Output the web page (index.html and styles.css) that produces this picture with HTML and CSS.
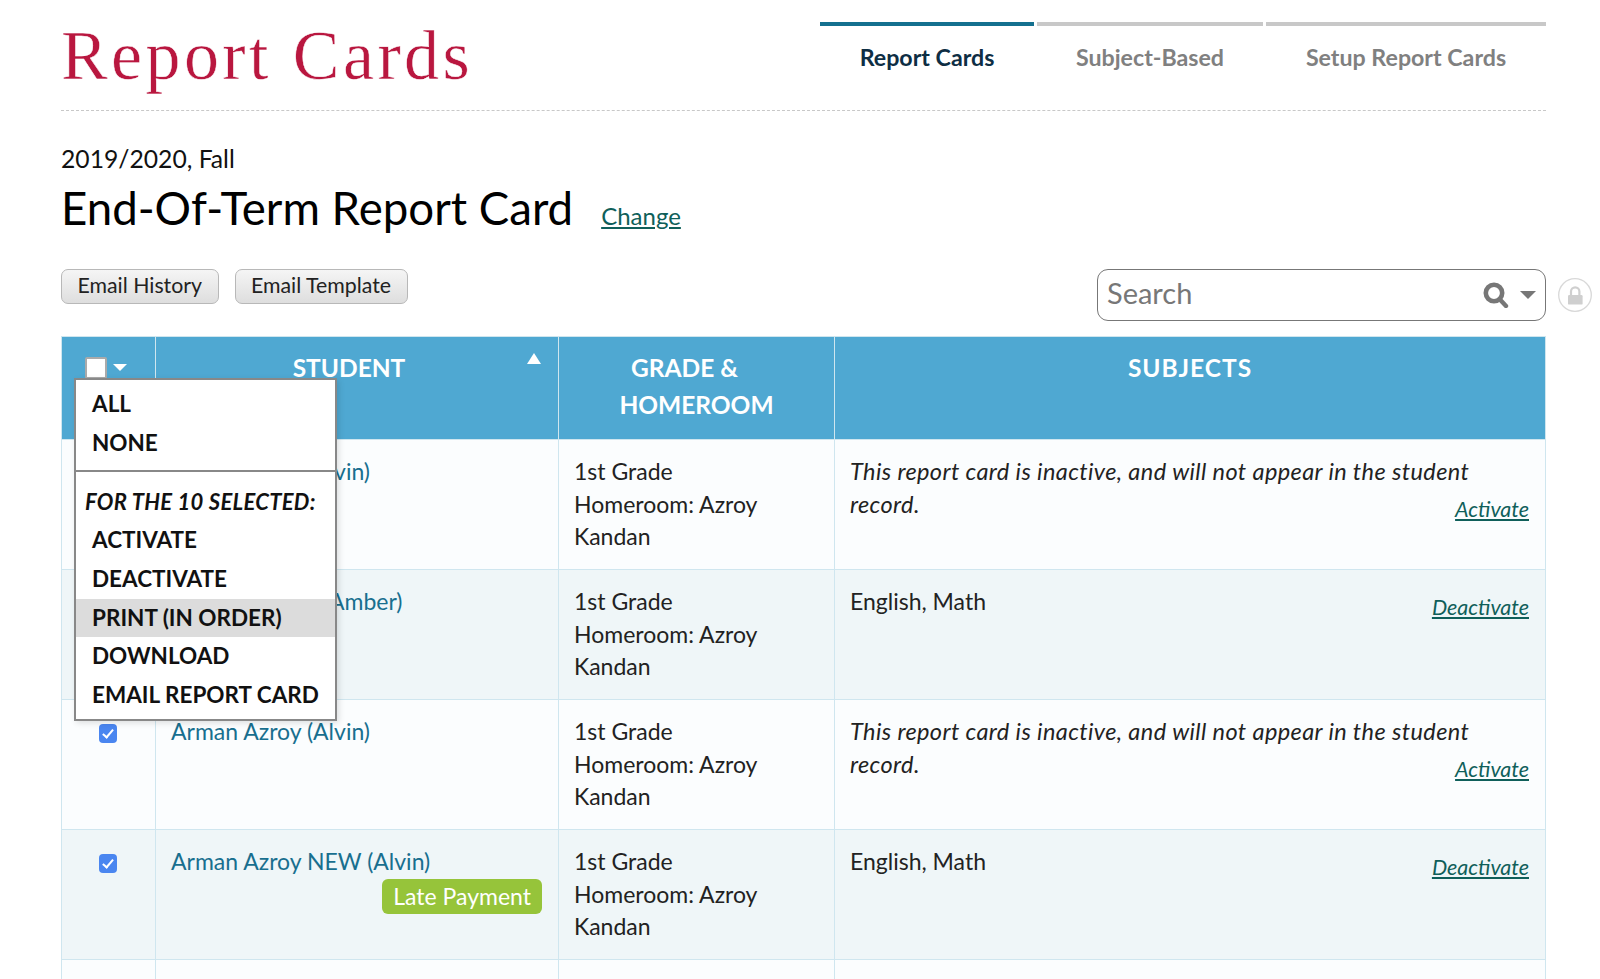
FILE: index.html
```html
<!DOCTYPE html>
<html lang="en">
<head>
    <meta charset="UTF-8">
    <meta name="viewport" content="width=device-width, initial-scale=1.0">
    <title>Report Cards</title>
    <link rel="stylesheet" href="styles.css">
</head>
<body>
<div class="page">
    <header class="page-header">
        <div class="page-title">Report Cards</div>
        <nav class="tabs">
            <a class="tab tab-first active" href="#">Report Cards</a>
            <a class="tab tab-second" href="#">Subject-Based</a>
            <a class="tab tab-third" href="#">Setup Report Cards</a>
        </nav>
    </header>

    <div class="term">2019/2020, Fall</div>
    <div class="card-name">
        <h1>End-Of-Term Report Card</h1>
        <a class="change" href="#">Change</a>
    </div>

    <div class="toolbar">
        <div class="buttons">
            <button class="btn">Email History</button>
            <button class="btn">Email Template</button>
        </div>
        <div class="search">
            <input type="text" placeholder="Search">
            <svg class="search-icon" width="26" height="26" viewBox="0 0 26 26">
                <circle cx="11" cy="11" r="8.2" fill="none" stroke="#777" stroke-width="4.6"/>
                <path d="M16.5 17 L23 24" stroke="#777" stroke-width="4.4" stroke-linecap="round"/>
            </svg>
            <span class="search-arrow"></span>
            <span class="lock">
                <svg width="34" height="34" viewBox="0 0 34 34">
                    <circle cx="17" cy="17" r="16.3" fill="#fff" stroke="#d8d8d8" stroke-width="1.3"/>
                    <path d="M13 17 V13.5 a4.2 4.2 0 0 1 8.4 0 V17" fill="none" stroke="#cfcfcf" stroke-width="2.2"/>
                    <rect x="10" y="17" width="14.6" height="9.6" rx="1.2" fill="#cfcfcf"/>
                </svg>
            </span>
        </div>
    </div>

    <div class="table-wrap">
        <table class="report-table">
            <thead>
                <tr>
                    <th class="col-check">
                        <span class="head-check"></span>
                        <span class="head-arrow"></span>
                    </th>
                    <th class="col-student">STUDENT<span class="sort-up"></span></th>
                    <th class="col-grade"><span class="grade-line">GRADE &amp;</span><br>HOMEROOM</th>
                    <th class="col-subjects">SUBJECTS</th>
                </tr>
            </thead>
            <tbody>
                <tr>
                    <td class="cell-check"><input type="checkbox" class="row-check" checked></td>
                    <td><a class="student" href="#">Arman Azroy (Alvin)</a></td>
                    <td>1st Grade<br>Homeroom: Azroy Kandan</td>
                    <td>
                        <div class="inactive">This report card is inactive, and will not appear in the student record.</div>
                        <a class="status-link" href="#">Activate</a>
                    </td>
                </tr>
                <tr>
                    <td class="cell-check"><input type="checkbox" class="row-check" checked></td>
                    <td><a class="student" href="#">Amanda Azroy (Amber)</a></td>
                    <td>1st Grade<br>Homeroom: Azroy Kandan</td>
                    <td>
                        <div>English, Math</div>
                        <a class="status-link" href="#">Deactivate</a>
                    </td>
                </tr>
                <tr>
                    <td class="cell-check"><input type="checkbox" class="row-check" checked></td>
                    <td><a class="student" href="#">Arman Azroy (Alvin)</a></td>
                    <td>1st Grade<br>Homeroom: Azroy Kandan</td>
                    <td>
                        <div class="inactive">This report card is inactive, and will not appear in the student record.</div>
                        <a class="status-link" href="#">Activate</a>
                    </td>
                </tr>
                <tr>
                    <td class="cell-check"><input type="checkbox" class="row-check" checked></td>
                    <td>
                        <a class="student" href="#">Arman Azroy NEW (Alvin)</a>
                        <div class="badge-row"><span class="badge">Late Payment</span></div>
                    </td>
                    <td>1st Grade<br>Homeroom: Azroy Kandan</td>
                    <td>
                        <div>English, Math</div>
                        <a class="status-link" href="#">Deactivate</a>
                    </td>
                </tr>
                <tr class="row-empty">
                    <td class="cell-check"></td>
                    <td></td>
                    <td></td>
                    <td></td>
                </tr>
            </tbody>
        </table>

        <div class="select-menu">
            <div class="menu-group">
                <a class="menu-item" href="#">ALL</a>
                <a class="menu-item" href="#">NONE</a>
            </div>
            <div class="menu-group menu-group-actions">
                <div class="menu-label">FOR THE 10 SELECTED:</div>
                <a class="menu-item" href="#">ACTIVATE</a>
                <a class="menu-item" href="#">DEACTIVATE</a>
                <a class="menu-item hover" href="#">PRINT (IN ORDER)</a>
                <a class="menu-item" href="#">DOWNLOAD</a>
                <a class="menu-item" href="#">EMAIL REPORT CARD</a>
            </div>
        </div>
    </div>
</div>
</body>
</html>
```

FILE: styles.css
```css
html, body {
    margin: 0;
    padding: 0;
    height: 979px;
    overflow: hidden;
    background: #fff;
}
body {
    font-family: "Lato", "Noto Sans", sans-serif;
    font-size: 23px;
    color: #222;
}
a {
    color: #186f8f;
    text-decoration: none;
}
.page {
    width: 1485px;
    margin-left: 61px;
}

/* header */
.page-header {
    display: flex;
    justify-content: space-between;
    height: 110px;
    border-bottom: 1px dashed #c8c8c8;
}
.page-title {
    font-family: "Liberation Serif", serif;
    font-size: 70px;
    line-height: 70px;
    margin-top: 21px;
    letter-spacing: 3.4px;
    color: #b9173f;
    -webkit-text-stroke: 0.5px #fff;
}
.tabs {
    display: flex;
    gap: 3px;
    margin-top: 22px;
}
.tab {
    height: 68px;
    border-top: 4px solid #c8c8c8;
    box-sizing: border-box;
    text-align: center;
    line-height: 62px;
    font-size: 23.2px;
    font-weight: 700;
    color: #808080;
}
.tab-first { width: 214px; }
.tab-second { width: 226px; }
.tab-third { width: 280px; }
.tab.active {
    border-top-color: #14708f;
    color: #0e2e44;
}

/* title block */
.term {
    margin-top: 33px;
    font-size: 24.7px;
    line-height: 30px;
    color: #111;
}
.card-name {
    display: flex;
    align-items: baseline;
    gap: 28px;
    margin-top: 6px;
}
.card-name h1 {
    margin: 0;
    font-size: 45.6px;
    line-height: 56px;
    font-weight: 400;
    color: #000;
}
.change {
    font-size: 24px;
    color: #0f5f5a;
    text-decoration: underline;
}

/* toolbar */
.toolbar {
    display: flex;
    justify-content: space-between;
    align-items: flex-start;
    margin-top: 33px;
    height: 67px;
}
.buttons {
    display: flex;
    gap: 16px;
}
.btn {
    height: 35px;
    padding: 0 15.5px 3px;
    font-family: inherit;
    font-size: 21.3px;
    color: #222;
    background: linear-gradient(#f5f5f5, #dedede);
    border: 1px solid #b8b8b8;
    border-radius: 7px;
}
.search {
    position: relative;
    width: 449px;
    height: 52px;
    box-sizing: border-box;
    border: 1.5px solid #777;
    border-radius: 11px;
}
.search input {
    width: 370px;
    height: 100%;
    padding: 0 0 5px 9px;
    box-sizing: border-box;
    border: none;
    outline: none;
    background: none;
    font-family: inherit;
    font-size: 29px;
}
.search input::placeholder {
    color: #777;
}
.search-icon {
    position: absolute;
    top: 12px;
    right: 36px;
}
.search-arrow {
    position: absolute;
    top: 21px;
    right: 9px;
    border-left: 8px solid transparent;
    border-right: 8px solid transparent;
    border-top: 8px solid #777;
}
.lock {
    position: absolute;
    top: 8px;
    left: 460px;
    width: 34px;
    height: 34px;
}

/* table */
.table-wrap {
    position: relative;
}
.report-table {
    width: 1485px;
    table-layout: fixed;
    border-collapse: collapse;
    border: 1px solid #cfe6ef;
}
.col-check { width: 94px; }
.col-student { width: 403px; }
.col-grade { width: 276px; }
.report-table th {
    position: relative;
    height: 103px;
    padding: 12px 16px 0;
    box-sizing: border-box;
    vertical-align: top;
    background: #4fa8d2;
    color: #fff;
    font-size: 24.5px;
    line-height: 37px;
    font-weight: 700;
    text-align: center;
    border-left: 1px solid #cfe6ef;
}
.report-table th.col-student {
    padding-right: 32px;
}
.report-table th.col-subjects {
    letter-spacing: 1px;
}
.grade-line {
    margin-right: 24px;
}
.report-table td {
    height: 130px;
    padding: 15px 16px 16px 15px;
    box-sizing: border-box;
    vertical-align: top;
    line-height: 32.5px;
    border: 1px solid #cfe6ef;
}
.report-table tbody tr:nth-child(odd) td { background: #fbfdfe; }
.report-table tbody tr:nth-child(even) td { background: #eff6f8; }
.head-check {
    position: absolute;
    top: 20px;
    left: 23px;
    width: 22px;
    height: 22px;
    box-sizing: border-box;
    background: #fff;
    border: 2px solid #aaa;
    border-radius: 2px;
}
.head-arrow {
    position: absolute;
    top: 27px;
    left: 51px;
    border-left: 7px solid transparent;
    border-right: 7px solid transparent;
    border-top: 7px solid #fff;
}
.sort-up {
    position: absolute;
    top: 16px;
    right: 17px;
    border-left: 7px solid transparent;
    border-right: 7px solid transparent;
    border-bottom: 11px solid #fff;
}
.cell-check {
    text-align: center;
}
.row-check {
    appearance: none;
    position: relative;
    width: 18px;
    height: 19px;
    margin: 9px 0 0;
    background: #4a86f0;
    border-radius: 4px;
}
.row-check::after {
    content: "";
    position: absolute;
    left: 6px;
    top: 3px;
    width: 4px;
    height: 9px;
    border-right: 2px solid #fff;
    border-bottom: 2px solid #fff;
    transform: rotate(40deg);
}
.inactive {
    font-style: italic;
    font-size: 23.5px;
    letter-spacing: 0.4px;
}
.status-link {
    display: block;
    margin-top: -27px;
    text-align: right;
    font-size: 21.5px;
    font-style: italic;
    color: #0f5f5a;
    text-decoration: underline;
}
.badge-row {
    text-align: right;
    margin-top: 1px;
}
.badge {
    display: inline-block;
    height: 35px;
    padding: 0 11px;
    line-height: 34px;
    background: #96c43a;
    color: #fff;
    border-radius: 6px;
}

/* select menu, sits over the table */
.select-menu {
    position: absolute;
    top: 42px;
    left: 13px;
    width: 263px;
    box-sizing: border-box;
    background: #fff;
    border: 2px solid #888;
    box-shadow: 2px 2px 6px rgba(0, 0, 0, 0.12);
}
.menu-group {
    padding: 5px 0 8px;
}
.menu-group-actions {
    border-top: 2px solid #888;
    padding: 11px 0 4px;
}
.menu-item {
    display: block;
    height: 38.7px;
    line-height: 38.7px;
    padding-left: 16px;
    font-size: 22.5px;
    font-weight: 700;
    color: #111;
}
.menu-item.hover {
    background: #dcdcdc;
}
.menu-label {
    padding-left: 9px;
    height: 38px;
    line-height: 38px;
    font-size: 22px;
    letter-spacing: 0.3px;
    font-weight: 700;
    font-style: italic;
    color: #111;
}
```
